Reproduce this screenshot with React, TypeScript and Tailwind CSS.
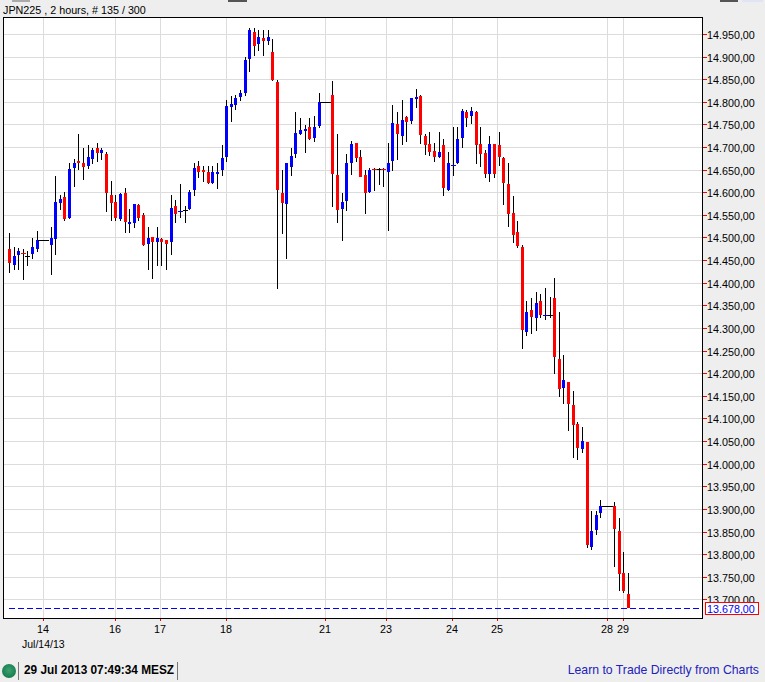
const C = ['#ff0000', '#0000ff', '#000000'];
const D: number[][] = [
[233,273,249,263,0],[247,270,256,265,1],[248,270,251,255,1],[249,280,253,254,0],[251,266,256,257,2],
[238,259,247,254,1],[231,252,240,249,1],[240,240,240,241,2],[240,240,240,241,2],[227,275,238,245,1],
[176,255,202,239,1],[195,210,199,203,1],[192,221,197,219,0],[163,219,169,218,1],[159,187,163,168,1],
[134,170,161,163,0],[148,180,163,167,0],[145,169,157,166,1],[148,164,150,159,1],[143,162,148,153,0],
[148,160,150,153,1],[152,212,154,193,0],[181,221,195,203,0],[195,221,202,218,0],[193,221,194,219,1],
[188,233,193,222,0],[209,233,222,224,1],[204,228,204,223,1],[204,221,205,218,0],[213,246,215,245,0],
[227,270,238,244,1],[237,279,237,242,0],[227,266,238,242,1],[238,266,239,242,0],[240,270,240,244,0],
[195,255,208,242,1],[200,223,206,214,0],[184,218,211,212,1],[206,223,210,211,2],[190,210,192,209,1],
[163,196,168,190,1],[161,178,166,172,0],[166,182,170,172,0],[166,184,172,183,0],[166,184,172,183,1],
[163,189,172,174,1],[145,176,158,170,1],[100,162,106,157,1],[96,122,104,107,1],[95,110,98,105,1],
[90,101,93,97,1],[57,96,60,93,1],[28,72,30,59,1],[28,56,32,46,0],[30,51,37,44,1],
[30,56,38,41,0],[30,45,37,41,1],[39,81,52,80,0],[80,289,82,190,0],[170,234,193,203,0],
[163,259,163,204,1],[148,176,156,167,1],[112,158,133,154,1],[118,135,130,134,1],[125,153,129,131,1],
[118,140,127,139,0],[116,142,127,138,1],[93,128,102,126,1],[102,102,102,103,2],[102,102,102,103,2],
[81,207,95,174,0],[134,223,175,210,0],[193,241,202,209,1],[154,211,163,201,1],[141,175,144,163,1],
[143,162,143,158,0],[150,177,157,177,0],[170,214,175,193,0],[168,193,170,192,1],[168,191,169,170,0],
[168,185,169,170,2],[168,187,169,170,0],[143,231,163,172,1],[105,171,123,161,1],[112,160,124,134,0],
[100,145,120,136,1],[116,142,117,122,0],[98,124,98,121,1],[89,108,97,99,1],[95,144,96,135,0],
[134,155,136,145,0],[132,156,144,152,0],[143,162,151,157,0],[132,158,152,157,1],[139,196,145,188,0],
[152,191,163,190,1],[127,176,165,166,1],[127,164,139,163,1],[109,148,111,138,1],[110,127,112,118,0],
[107,124,111,116,1],[111,164,112,145,0],[127,167,144,154,0],[150,178,153,174,0],[136,182,144,174,1],
[144,178,144,174,0],[132,166,145,157,0],[157,205,158,183,0],[163,227,184,214,0],[196,243,213,235,0],
[221,248,232,246,0],[245,349,247,330,0],[301,336,312,332,1],[298,334,310,317,0],[292,331,303,318,1],
[294,318,301,315,0],[288,320,315,316,1],[297,318,315,316,2],[278,374,298,357,0],[312,397,359,389,0],
[355,404,380,388,1],[382,431,382,404,0],[391,458,405,425,0],[422,460,424,448,0],[427,453,441,449,1],
[442,548,442,545,0],[511,550,531,547,1],[511,535,515,530,1],[500,518,506,513,1],[506,506,506,507,2],
[506,506,506,507,2],[502,567,506,529,0],[518,591,531,574,0],[552,593,573,591,0],[573,608,594,608,0],
];
const PRICES = Array.from({ length: 26 }, (_, k) => 14950 - 50 * k);
const yOf = (k: number) => Math.round(33.9 + 22.62 * k);
const XT: [number, string][] = [[43,'14'],[115,'16'],[160,'17'],[226,'18'],[325,'21'],[386,'23'],[452,'24'],[497,'25'],[607,'28'],[623,'29']];
const fmt = (p: number) => `${Math.floor(p / 1000)}.${String(p % 1000).padStart(3, '0')},00`;

function Chart() {
  return (
    <svg width={765} height={638} viewBox="0 17 765 638" className="block" shapeRendering="crispEdges"
      style={{ fontFamily: '"Liberation Sans", Arial, sans-serif' }}>
      <rect x={3} y={17} width={700} height={602} fill="#ffffff" />
      {PRICES.map((_, k) => <rect key={k} x={4} y={yOf(k)} width={698} height={1} fill="#dcdcdc" />)}
      {XT.map(([x]) => <rect key={x} x={x} y={18} width={1} height={600} fill="#dcdcdc" />)}
      {D.map((c, i) => {
        const x = Math.floor(9.5 + 4.62 * i);
        const dash = c[0] === c[1];
        return (
          <g key={i}>
            {dash
              ? <rect x={x - 3} y={c[2]} width={6} height={1} fill={C[c[4]]} />
              : <rect x={x} y={c[0]} width={1} height={c[1] - c[0]} fill="#000000" />}
            {!dash && (c[3] - c[2] <= 1
              ? <rect x={x - 2} y={c[2]} width={5} height={1} fill={C[c[4]]} />
              : <rect x={x - 1} y={c[2]} width={3} height={c[3] - c[2]} fill={C[c[4]]} />)}
          </g>
        );
      })}
      <line x1={9} x2={703} y1={608.5} y2={608.5} stroke="#0000ff" strokeDasharray="6 3" />
      <rect x={3} y={17} width={1} height={602} fill="#000" />
      <rect x={702} y={17} width={1} height={602} fill="#000" />
      <rect x={3} y={17} width={700} height={1} fill="#000" />
      <rect x={3} y={618} width={700} height={1} fill="#000" />
      {PRICES.map((p, k) => (
        <g key={p}>
          <rect x={703} y={yOf(k)} width={4} height={1} fill="#ff0000" />
          <text x={707} y={yOf(k) + 5} fontSize={10.75} fill="#000">{fmt(p)}</text>
        </g>
      ))}
      {XT.map(([x, t]) => (
        <g key={x}>
          <rect x={x} y={619} width={1} height={2} fill="#ff0000" />
          <text x={x} y={633} fontSize={10.75} textAnchor="middle" fill="#000">{t}</text>
        </g>
      ))}
      <text x={22} y={648} fontSize={10.5} fill="#000">Jul/14/13</text>
      <rect x={705.5} y={602.5} width={53} height={12} fill="#fff" stroke="#ff0000" />
      <text x={707} y={613} fontSize={10.75} fill="#0000ff">13.678,00</text>
    </svg>
  );
}

export default function App() {
  return (
    <div className="w-[765px] h-[682px] bg-[#eeeeee] flex flex-col overflow-hidden font-['Liberation_Sans',Arial,sans-serif]">
      <div className="h-[2px] flex">
        <div className="ml-[12px] w-[18px] bg-[#aaaaaa]" />
        <div className="ml-[198px] w-[19px] bg-[#555555]" />
        <div className="ml-[473px] w-[18px] bg-[#555555]" />
        <div className="ml-[4px] w-[21px] bg-[#e0e4f5]" />
      </div>
      <div className="h-[15px] pl-[3px] text-[10.75px] leading-[17px] text-black whitespace-nowrap">JPN225 , 2 hours, # 135 / 300</div>
      <Chart />
      <div className="flex items-center h-[27px] pt-[4px] text-[12px]">
        <div className="w-[14px] h-[14px] ml-[2px] rounded-full bg-[radial-gradient(circle_at_50%_45%,#3fa070,#1c8453_60%,#11603d)]" />
        <div className="w-px h-[18px] bg-[#777777] ml-[2px]" />
        <div className="ml-[5px] w-[153px] text-[11.85px] font-bold text-black whitespace-nowrap">29 Jul 2013 07:49:34 MESZ</div>
        <div className="w-px h-[18px] bg-[#777777]" />
        <div className="ml-auto mr-[6px] text-[12.25px] text-[#2222bb] whitespace-nowrap">Learn to Trade Directly from Charts</div>
      </div>
    </div>
  );
}
